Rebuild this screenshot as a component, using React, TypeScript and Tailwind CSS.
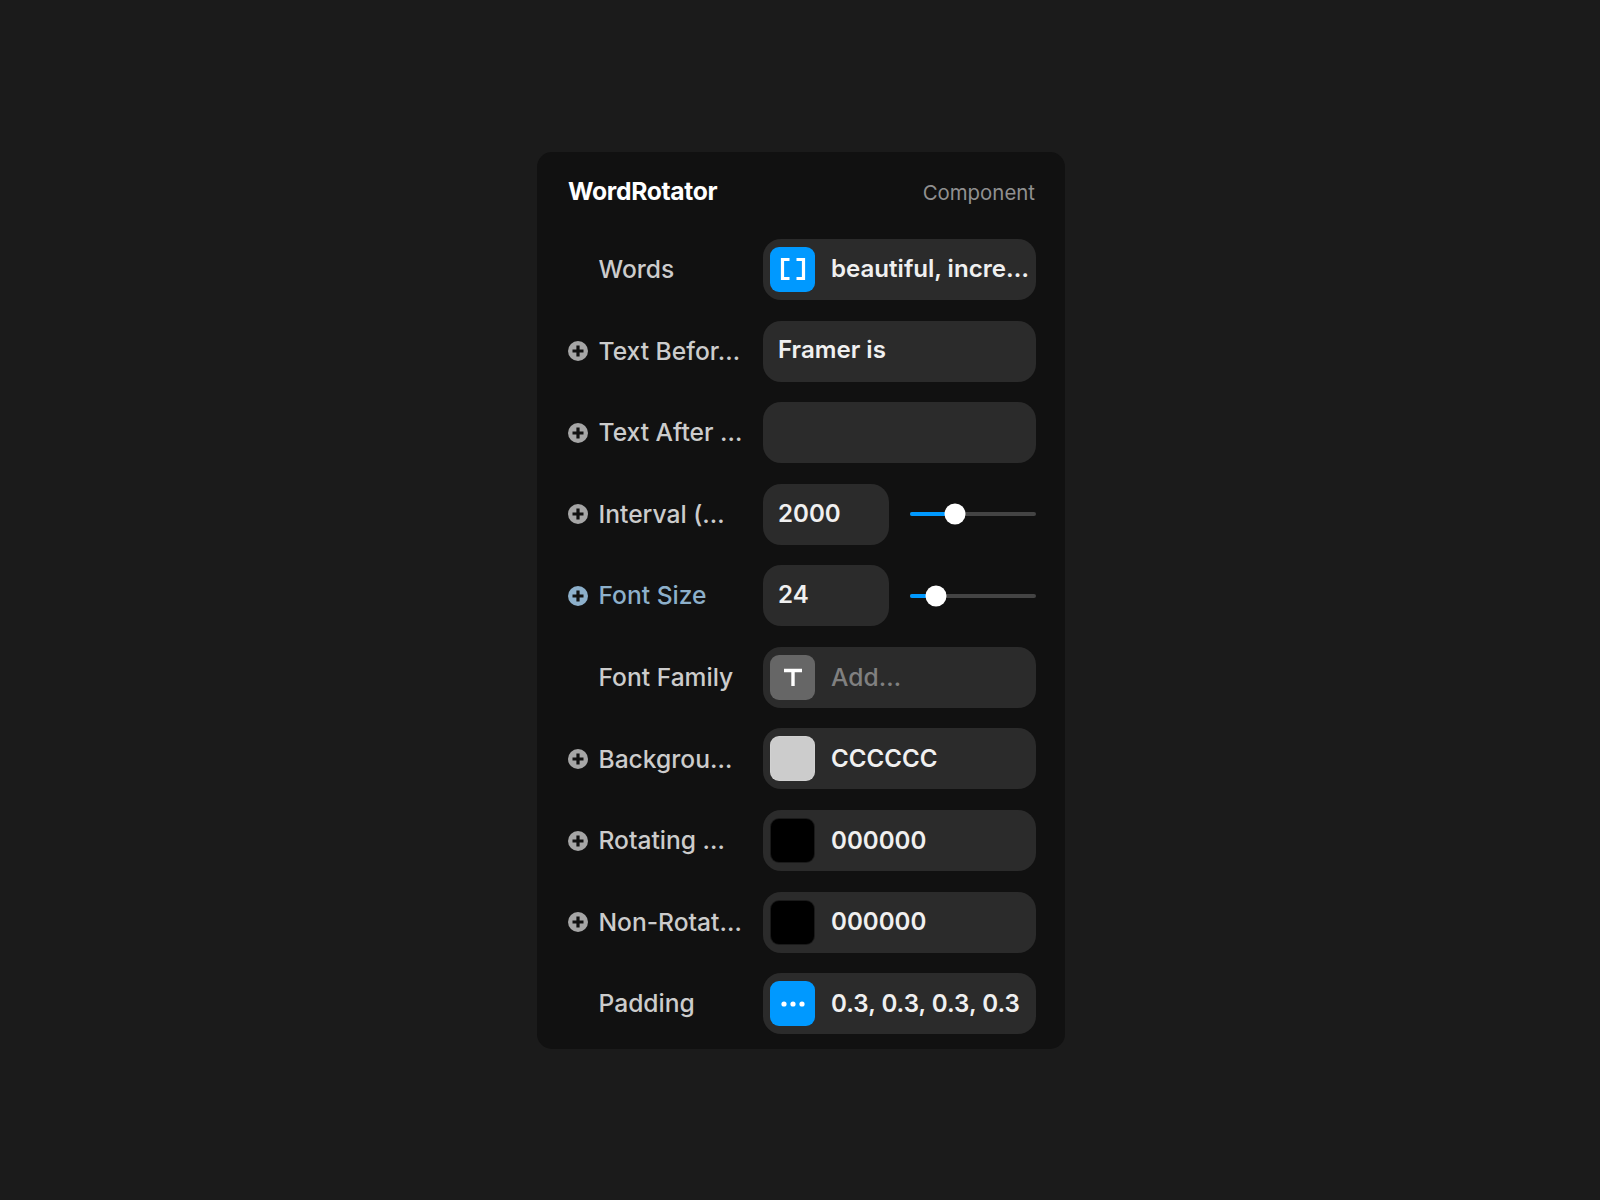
const INTER = "font-['Inter',sans-serif]";

function PlusIcon({ blue }: { blue?: boolean }) {
  return (
    <svg width="20" height="20" viewBox="0 0 20 20" className="shrink-0">
      <circle cx="10" cy="10" r="10" fill={blue ? "#8db0cb" : "#a6a6a6"} />
      <path d="M10 4.5v11M4.5 10h11" stroke="#111111" strokeWidth="3.2" />
    </svg>
  );
}

function Label({ text, plus, blue }: { text: string; plus?: boolean; blue?: boolean }) {
  return (
    <div className="flex w-[195px] shrink-0 items-center">
      <div className="w-[30.5px] shrink-0">{plus && <PlusIcon blue={blue} />}</div>
      <span className={`whitespace-nowrap text-[24.6px] font-medium ${blue ? "text-[#8db0cb]" : "text-[#cccccc]"}`}>{text}</span>
    </div>
  );
}

function Tile({ className, children }: { className: string; children?: React.ReactNode }) {
  return <div className={`flex h-[45px] w-[45px] shrink-0 items-center justify-center rounded-[9px] ${className}`}>{children}</div>;
}

function TileInput({ tile, value, muted }: { tile: React.ReactNode; value: string; muted?: boolean }) {
  return (
    <div className="flex h-[61px] w-[273px] items-center gap-[16px] rounded-[18px] bg-[#2b2b2b] pl-[7px]">
      {tile}
      <span className={`whitespace-nowrap ${muted ? "text-[24.6px] font-medium text-[#808080]" : "text-[24.1px] font-semibold text-[#f0f0f0]"}`}>{value}</span>
    </div>
  );
}

function TextInput({ value }: { value?: string }) {
  return (
    <div className="flex h-[61px] w-[273px] items-center rounded-[18px] bg-[#2b2b2b] px-[15px]">
      <span className="-mt-[1px] text-[24.1px] font-semibold text-[#f0f0f0]">{value}</span>
    </div>
  );
}

function NumberSlider({ value, pct }: { value: string; pct: number }) {
  return (
    <div className="flex items-center gap-[21px]">
      <div className="flex h-[61px] w-[126px] items-center rounded-[18px] bg-[#2b2b2b] px-[15px]">
        <span className="-mt-[1px] text-[24.1px] font-semibold text-[#f0f0f0]">{value}</span>
      </div>
      <div className="relative h-[4px] w-[126px] rounded-full bg-[#444444]">
        <div className="h-full rounded-full bg-[#0099ff]" style={{ width: `${pct}%` }} />
        <div className="absolute top-1/2 h-[21px] w-[21px] -translate-x-1/2 -translate-y-1/2 rounded-full bg-white" style={{ left: `${pct}%` }} />
      </div>
    </div>
  );
}

function Row({ label, plus, blue, children }: { label: string; plus?: boolean; blue?: boolean; children: React.ReactNode }) {
  return (
    <div className="flex items-center">
      <Label text={label} plus={plus} blue={blue} />
      {children}
    </div>
  );
}

export default function App() {
  return (
    <div className={`flex min-h-[1200px] items-center justify-center bg-[#1b1b1b] pl-[2px] pt-[1px] ${INTER}`}>
      <div className="w-[528px] rounded-[15px] bg-[#111111] pb-[14.4px] pl-[31px] pr-[29px] pt-[21px]">
        <div className="mb-[26.6px] flex h-[39px] items-baseline justify-between">
          <span className="text-[24.7px] font-bold tracking-[-0.35px] text-white">WordRotator</span>
          <span className="pt-[2px] pr-[1px] text-[20.4px] text-[#909090]">Component</span>
        </div>
        <div className="flex flex-col gap-[20.6px]">
          <Row label="Words">
            <TileInput
              value="beautiful, incre…"
              tile={
                <Tile className="bg-[#0099ff]">
                  <svg width="26" height="24" viewBox="0 0 26 24" fill="none" stroke="#ffffff" strokeWidth="3.2">
                    <path d="M9.5 2.5H2.5v19h7M16.5 2.5h7v19h-7" />
                  </svg>
                </Tile>
              }
            />
          </Row>
          <Row label="Text Befor…" plus>
            <TextInput value="Framer is" />
          </Row>
          <Row label="Text After …" plus>
            <TextInput />
          </Row>
          <Row label="Interval (…" plus>
            <NumberSlider value="2000" pct={36} />
          </Row>
          <Row label="Font Size" plus blue>
            <NumberSlider value="24" pct={21} />
          </Row>
          <Row label="Font Family">
            <TileInput
              muted
              value="Add…"
              tile={
                <Tile className="bg-[#666666]">
                  <svg width="20" height="20" viewBox="0 0 20 20" fill="none" stroke="#ffffff" strokeWidth="3.4">
                    <path d="M1 3.5h18M10 3.5V19" />
                  </svg>
                </Tile>
              }
            />
          </Row>
          <Row label="Backgrou…" plus>
            <TileInput value="CCCCCC" tile={<Tile className="border border-white/10 bg-[#cccccc]" />} />
          </Row>
          <Row label="Rotating …" plus>
            <TileInput value="000000" tile={<Tile className="border border-white/10 bg-black" />} />
          </Row>
          <Row label="Non-Rotat…" plus>
            <TileInput value="000000" tile={<Tile className="border border-white/10 bg-black" />} />
          </Row>
          <Row label="Padding">
            <TileInput
              value="0.3, 0.3, 0.3, 0.3"
              tile={
                <Tile className="bg-[#0099ff]">
                  <svg width="24" height="6" viewBox="0 0 24 6" fill="#ffffff">
                    <circle cx="3" cy="3" r="2.6" />
                    <circle cx="12" cy="3" r="2.6" />
                    <circle cx="21" cy="3" r="2.6" />
                  </svg>
                </Tile>
              }
            />
          </Row>
        </div>
      </div>
    </div>
  );
}
